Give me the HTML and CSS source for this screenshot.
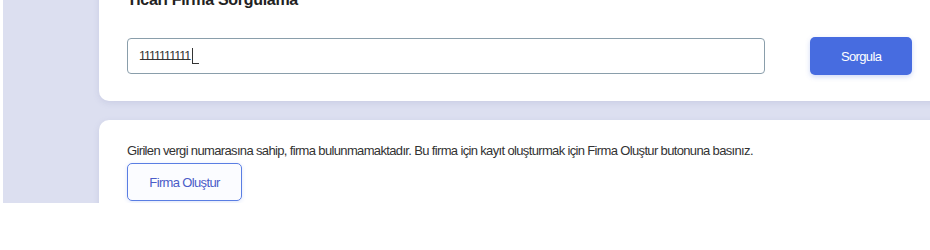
FILE: index.html
```html
<!DOCTYPE html>
<html lang="tr">
<head>
    <meta charset="UTF-8">
    <title>Ticari Firma Sorgulama</title>
    <link rel="stylesheet" href="styles.css">
</head>
<body>
    <div class="screen">
        <div class="card search-card">
            <h2 class="card-title">Ticari Firma Sorgulama</h2>
            <div class="search-row">
                <div class="tax-input">1111111111<span class="caret"></span></div>
                <button class="btn-primary">Sorgula</button>
            </div>
        </div>

        <div class="card result-card">
            <p class="info-text">Girilen vergi numarasına sahip, firma bulunmamaktadır. Bu firma için kayıt oluşturmak için Firma Oluştur butonuna basınız.</p>
            <button class="btn-outline">Firma Oluştur</button>
        </div>
    </div>
</body>
</html>
```

FILE: styles.css
```css
body {
    margin: 0;
    background: #ffffff;
    font-family: 'Liberation Sans', Arial, sans-serif;
    color: #333;
}

.screen {
    margin-left: 3px;
    height: 203px;
    overflow: hidden;
    background: #dcdff0;
    padding-left: 96px;
}

.card {
    background: #ffffff;
    border-radius: 10px;
    margin-right: -20px;
    box-shadow: 0 2px 6px rgba(120, 130, 180, 0.18);
}

.search-card {
    margin-top: -30px;
    padding: 20px 38px 26px 28px;
    border-radius: 0 0 10px 10px;
}

.card-title {
    margin: 0 0 27px;
    font-size: 16px;
    line-height: 20px;
    font-weight: bold;
    color: #222;
    letter-spacing: -0.3px;
}

.search-row {
    display: flex;
    align-items: center;
    gap: 45px;
}

.tax-input {
    width: 640px;
    height: 36px;
    box-sizing: border-box;
    border: 1px solid #8a9eab;
    border-radius: 4px;
    padding: 0 11px;
    display: flex;
    align-items: center;
    font-size: 12.5px;
    letter-spacing: -1px;
    color: #333;
}

.caret {
    display: inline-block;
    width: 6px;
    height: 15px;
    border-left: 1px solid #333;
    border-bottom: 1px solid #333;
    margin-left: 2px;
}

.btn-primary {
    width: 102px;
    height: 38px;
    border: none;
    border-radius: 5px;
    background: #476ce0;
    color: #fff;
    font-family: inherit;
    font-size: 13px;
    letter-spacing: -0.65px;
    box-shadow: 0 2px 5px rgba(71, 108, 224, 0.25);
}

.result-card {
    margin-top: 19px;
    height: 200px;
    padding: 23px 28px 0;
}

.info-text {
    margin: 0 0 4px;
    font-size: 13px;
    line-height: 16px;
    letter-spacing: -0.65px;
    color: #333;
}

.btn-outline {
    width: 115px;
    height: 38px;
    border: 1px solid #5a7ee3;
    border-radius: 5px;
    background: #fbfcff;
    color: #4a5cc8;
    font-family: inherit;
    font-size: 13px;
    letter-spacing: -0.65px;
    box-shadow: 0 1px 4px rgba(90, 126, 227, 0.2);
}
```
